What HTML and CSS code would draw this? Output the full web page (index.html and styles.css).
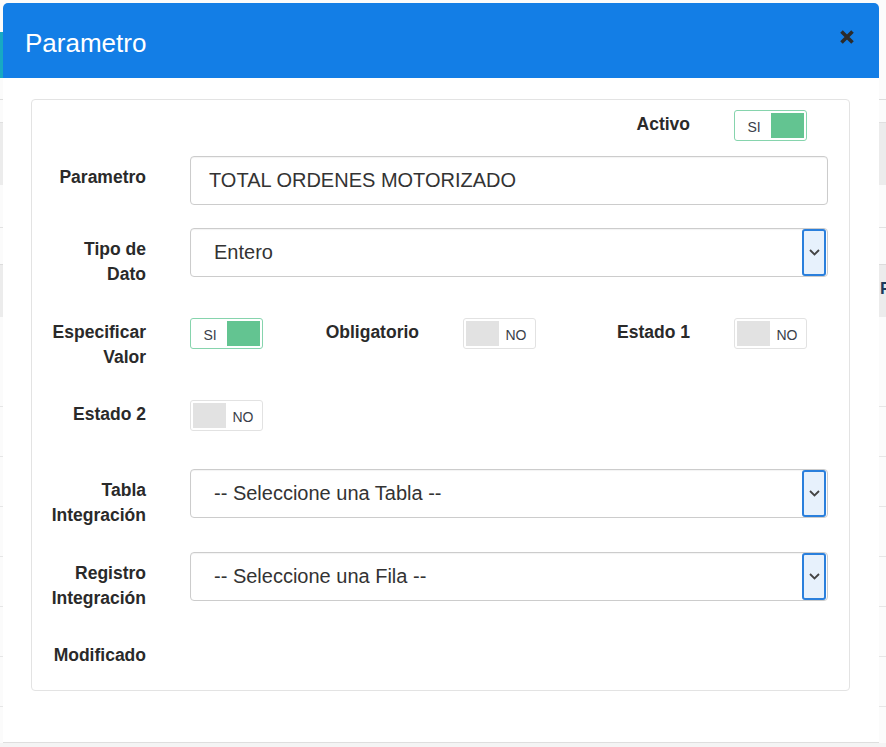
FILE: index.html
```html
<!DOCTYPE html>
<html lang="es">
<head>
<meta charset="utf-8">
<title>Parametro</title>
<link rel="stylesheet" href="styles.css">
</head>
<body>
<div class="page">
  <div class="bg-top"><div class="bg-btn"></div></div>
  <div class="bg-line"></div>
  <div class="bg-band"></div>
  <div class="bg-gap"></div>
  <div class="bg-line short"></div>
  <div class="bg-gap2"></div>
  <div class="bg-band2"><span class="bg-r">R</span></div>
  <div class="bg-rows">
    <div class="bg-row"></div><div class="bg-row"></div><div class="bg-row"></div>
    <div class="bg-row"></div><div class="bg-row"></div><div class="bg-row"></div>
    <div class="bg-row"></div><div class="bg-row"></div>
  </div>
</div>

<div class="modal">
  <div class="modal-header">
    <h4 class="modal-title">Parametro</h4>
    <span class="close" aria-label="Cerrar">
      <svg width="16" height="16" viewBox="0 0 16 16"><path d="M2.5 2.5 L13.5 13.5 M13.5 2.5 L2.5 13.5" stroke="#2b2b2b" stroke-width="3.6" stroke-linecap="butt"/></svg>
    </span>
  </div>
  <div class="modal-body">
    <div class="panel">
      <div class="tgrid r-a">
        <div class="grp col3">
          <div class="lbl">Activo</div>
          <div class="tg on"><span class="tg-txt">SI</span><span class="knob"></span></div>
        </div>
      </div>

      <div class="frow">
        <div class="lbl">Parametro</div>
        <div class="inp">TOTAL ORDENES MOTORIZADO</div>
      </div>

      <div class="frow m24">
        <div class="lbl">Tipo de<br>Dato</div>
        <div class="inp sel"><span class="sel-txt">Entero</span><span class="arrow"><svg width="11" height="7" viewBox="0 0 11 7"><path d="M1 1 L5.5 5.5 L10 1" fill="none" stroke="#444" stroke-width="1.8"/></svg></span></div>
      </div>

      <div class="tgrid">
        <div class="grp">
          <div class="lbl">Especificar<br>Valor</div>
          <div class="tg on"><span class="tg-txt">SI</span><span class="knob"></span></div>
        </div>
        <div class="grp">
          <div class="lbl">Obligatorio</div>
          <div class="tg off"><span class="knob"></span><span class="tg-txt">NO</span></div>
        </div>
        <div class="grp">
          <div class="lbl">Estado 1</div>
          <div class="tg off"><span class="knob"></span><span class="tg-txt">NO</span></div>
        </div>
      </div>

      <div class="tgrid r-b">
        <div class="grp">
          <div class="lbl">Estado 2</div>
          <div class="tg off"><span class="knob"></span><span class="tg-txt">NO</span></div>
        </div>
      </div>

      <div class="frow m24">
        <div class="lbl">Tabla<br>Integración</div>
        <div class="inp sel"><span class="sel-txt">-- Seleccione una Tabla --</span><span class="arrow"><svg width="11" height="7" viewBox="0 0 11 7"><path d="M1 1 L5.5 5.5 L10 1" fill="none" stroke="#444" stroke-width="1.8"/></svg></span></div>
      </div>

      <div class="frow">
        <div class="lbl">Registro<br>Integración</div>
        <div class="inp sel"><span class="sel-txt">-- Seleccione una Fila --</span><span class="arrow"><svg width="11" height="7" viewBox="0 0 11 7"><path d="M1 1 L5.5 5.5 L10 1" fill="none" stroke="#444" stroke-width="1.8"/></svg></span></div>
      </div>

      <div class="frow last">
        <div class="lbl">Modificado</div>
      </div>
    </div>
  </div>
</div>
</body>
</html>
```

FILE: styles.css
```css
* { box-sizing: border-box; }
html, body { margin: 0; padding: 0; }
body {
  width: 886px;
  height: 747px;
  overflow: hidden;
  background: #f4f4f4;
  font-family: "Liberation Sans", Arial, sans-serif;
  color: #333;
  position: relative;
}

/* background page behind the modal */
.page { background: #fbfbfb; height: 743px; }
.bg-top { height: 99px; padding-top: 32px; }
.bg-btn { width: 40px; height: 46px; background: #17a9c3; }
.bg-line { height: 1px; background: #dcdcdc; }
.bg-band { height: 63px; margin-top: 22px; background: #ececec; border-top: 1px solid #e0e0e0; }
.bg-gap { height: 42px; }
.bg-line.short { background: #e2e2e2; }
.bg-gap2 { height: 36px; }
.bg-band2 { height: 53px; background: #ececec; border-top: 1px solid #dcdcdc; padding: 14px 0 0 880px; }
.bg-r { font-size: 17px; color: #1d3b5c; font-weight: bold; }
.bg-rows { padding-top: 40px; }
.bg-row { height: 50px; border-bottom: 1px solid #e6e6e6; }

/* modal */
.modal {
  position: absolute;
  top: 3px;
  left: 3px;
  width: 876px;
  height: 740px;
  background: #fff;
  border-radius: 5px 5px 0 0;
  border-bottom: 1px solid #dedede;
}
.modal-header {
  height: 75px;
  background: #137ee6;
  border-radius: 5px 5px 0 0;
  display: flex;
  align-items: center;
  justify-content: space-between;
  padding: 4px 24px 0 22px;
}
.modal-title {
  margin: 0;
  font-weight: normal;
  font-size: 26px;
  color: #fff;
  line-height: 30px;
}
.close { display: flex; margin-top: -12px; }
.modal-body { padding: 21px 29px 0 28px; }

.panel {
  border: 1px solid #e3e3e3;
  border-radius: 4px;
  padding: 3px 0 22px 0;
}

/* rows */
.frow, .tgrid { margin-bottom: 23px; }
.m24 { margin-bottom: 24px; }
.r-a { margin-bottom: 15px; }
.r-b { margin-bottom: 38px; }
.frow.last { margin-bottom: 0; }

.frow {
  display: flex;
  align-items: flex-start;
  padding: 0 21px 0 18px;
}
.tgrid {
  display: grid;
  grid-template-columns: 273px 271px 273px;
  padding-left: 18px;
}
.col3 { grid-column: 3; }
.grp { display: flex; align-items: flex-start; }

.lbl {
  flex: none;
  width: 96px;
  margin-right: 44px;
  padding-top: 9px;
  text-align: right;
  font-weight: bold;
  font-size: 17.5px;
  line-height: 25px;
  color: #2a2a2a;
  white-space: nowrap;
}

.inp {
  flex: 1;
  height: 49px;
  border: 1px solid #cccccc;
  border-radius: 4px;
  padding: 0 18px;
  display: flex;
  align-items: center;
  font-size: 20px;
  color: #333;
  box-shadow: inset 0 1px 1px rgba(0,0,0,0.05);
}
.sel { padding: 0 1px 0 23px; align-items: stretch; }
.sel-txt { flex: 1; align-self: center; }
.arrow {
  flex: none;
  width: 24px;
  background: #e7f1fc;
  border: 2px solid #2a7fdc;
  border-radius: 3px;
  display: flex;
  align-items: center;
  justify-content: center;
}

/* toggles */
.tg {
  flex: none;
  width: 73px;
  height: 31px;
  margin-top: 7px;
  border: 1px solid #e2e2e2;
  border-radius: 3px;
  padding: 2px;
  display: flex;
  align-items: stretch;
  background: #fff;
}
.tg.on { border-color: #86d4ad; }
.knob { width: 33px; flex: none; background: #e2e2e2; }
.tg.on .knob { background: #63c491; }
.tg-txt {
  flex: 1;
  text-align: center;
  font-size: 14px;
  line-height: 25px;
  padding-top: 2px;
  color: #3a3f4a;
}
```
